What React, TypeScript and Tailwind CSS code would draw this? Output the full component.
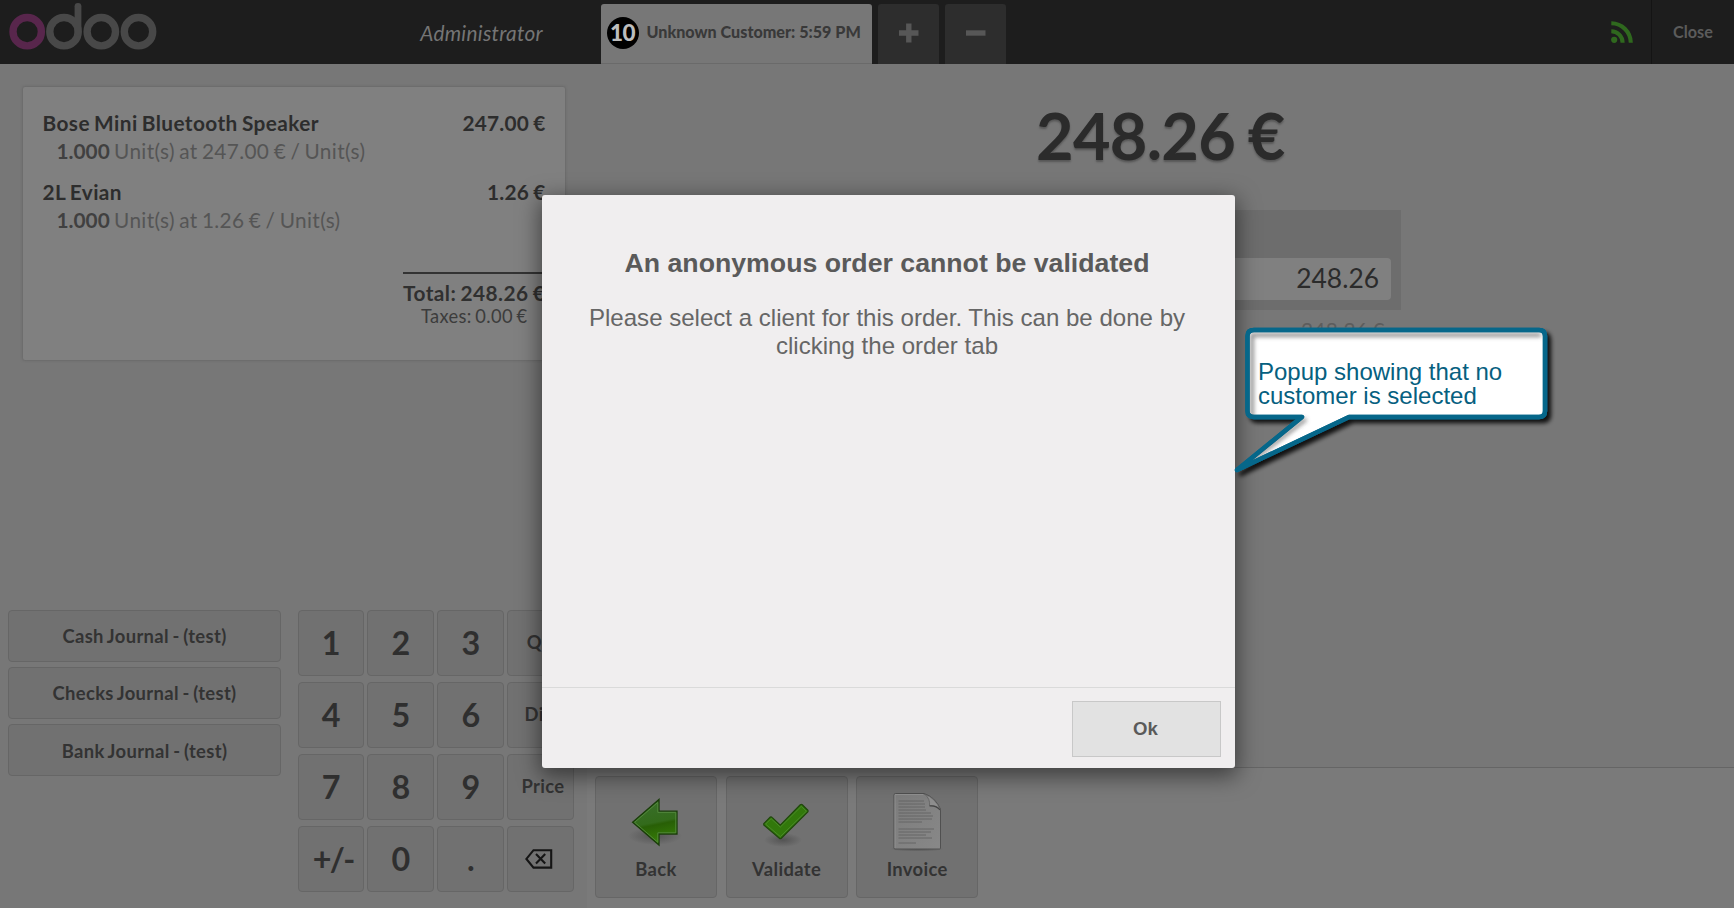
import React from "react";

const JOURNALS = ["Cash Journal - (test)", "Checks Journal - (test)", "Bank Journal - (test)"];

const KEYS = ["1", "2", "3", "Qty", "4", "5", "6", "Disc", "7", "8", "9", "Price", "+/-", "0", ".", "back"];

const LINES = [
  { name: "Bose Mini Bluetooth Speaker", total: "247.00 €", detail: "Unit(s) at 247.00 € / Unit(s)" },
  { name: "2L Evian", total: "1.26 €", detail: "Unit(s) at 1.26 € / Unit(s)" },
];

function OdooLogo() {
  return (
    <svg className="block shrink-0" width="160" height="56" viewBox="0 0 160 56" fill="none" strokeWidth="7.4">
      <g stroke="#484848">
        <circle cx="64" cy="31.7" r="14.2" />
        <path d="M78 32V6.3" strokeLinecap="round" strokeWidth="6.8" />
        <circle cx="101.3" cy="31.7" r="14.2" />
        <circle cx="138.5" cy="31.7" r="14.2" />
      </g>
      <circle cx="27.2" cy="31.7" r="14.2" stroke="#58264c" />
    </svg>
  );
}

function BackIcon() {
  return (
    <svg className="block" width="60" height="60" viewBox="0 0 60 60">
      <defs>
        <linearGradient id="arrow" x1="0.4" y1="0" x2="0.6" y2="1">
          <stop offset="0" stopColor="#3a6e2c" />
          <stop offset="0.5" stopColor="#336b1b" />
          <stop offset="0.56" stopColor="#285f06" />
          <stop offset="1" stopColor="#398308" />
        </linearGradient>
        <radialGradient id="shade">
          <stop offset="0" stopColor="#404040" stopOpacity="0.6" />
          <stop offset="1" stopColor="#404040" stopOpacity="0" />
        </radialGradient>
      </defs>
      <ellipse cx="29" cy="45" rx="27" ry="9" fill="url(#shade)" />
      <path d="M6.6 31.3L33 8.5V20.2H51V43H33V54Z" fill="url(#arrow)" stroke="#1a3d0a" strokeWidth="1.3" />
      <path d="M8.6 31.3L31.8 11.4V21.4H49.8V41.8H31.8V51.3Z" fill="none" stroke="#558a3e" strokeWidth="0.9" />
    </svg>
  );
}

function CheckIcon() {
  return (
    <svg className="block" width="60" height="60" viewBox="0 0 60 60">
      <ellipse cx="26" cy="49" rx="19" ry="7" fill="url(#shade)" />
      <g transform="translate(-1.2 0.6)">
        <path
          d="M8 32L14.5 25.5Q15.5 25 16.5 26L24.5 33.5L44.5 13.2Q45.5 12.4 46.5 13.2L52 18.6Q52.6 19.5 52 20.3L25.5 46.6Q24.5 47.4 23.6 46.6L8 33.4Z"
          fill="#32780b"
          stroke="#20480c"
          strokeWidth="1.3"
        />
        <path d="M9.8 32.5L15.3 27L24.5 35.5L45.4 14.8L50.6 19.6L24.5 45Z" fill="none" stroke="#4c8c2a" strokeWidth="0.9" />
      </g>
    </svg>
  );
}

function InvoiceIcon() {
  const rows = [11, 14, 17, 20, 23, 26, 29, 32, 39, 42, 45, 48, 53];
  const ends = [37, 38, 38, 39, 44, 46, 45, 35, 47, 44, 39, 45, 29];
  return (
    <svg className="block" width="60" height="60" viewBox="0 0 60 60">
      <defs>
        <linearGradient id="paper" x1="0" y1="0" x2="1" y2="1">
          <stop offset="0" stopColor="#7c7c7c" />
          <stop offset="1" stopColor="#888" />
        </linearGradient>
      </defs>
      <ellipse cx="30" cy="58" rx="27" ry="2.8" fill="url(#shade)" />
      <path d="M7 4Q7 2.5 8.5 2.5H37Q48 6 53.5 18V57Q53.5 58 52.5 58H8Q7 58 7 57Z" fill="url(#paper)" stroke="#505050" strokeWidth="1" />
      <path d="M8 57V3.5H36" fill="none" stroke="#929292" strokeWidth="0.9" />
      {rows.map((y, i) => (
        <path key={y} d={`M11.5 ${y - 1}H${ends[i]}`} stroke="#636363" strokeWidth="0.9" />
      ))}
      <path d="M37.5 3Q43.5 8 42.5 14.5Q49.5 14 53.5 19Q48.5 7 37.5 3Z" fill="#8e8e8e" stroke="#5c5c5c" strokeWidth="0.7" />
      <path d="M42.5 15Q49.5 14.5 53 19" stroke="#454545" strokeWidth="1.2" fill="none" />
    </svg>
  );
}

function BackspaceIcon() {
  return (
    <svg className="mr-[8px] block shrink-0" width="28" height="20" viewBox="0 0 28 20" fill="none" stroke="#151515" strokeWidth="2.1">
      <path d="M8.5 1.2H26.2V18.6H8.5L1.4 9.9Z" />
      <path d="M11 5.1L20.2 14.4M20.2 5.1L11 14.4" />
    </svg>
  );
}

function Header() {
  return (
    <header className="flex h-[63.6px] shrink-0 bg-[#1d1d1d]">
      <OdooLogo />
      <div className="w-[441px] pt-[16.5px] pr-[58px] text-right text-[20.8px] leading-[32px] tracking-[0.015em] text-[#757575] italic">
        Administrator
      </div>
      <div className="flex flex-1 gap-[6.4px] pt-1">
        <div className="flex w-[271px] rounded-t-[3px] border-b border-[#6a6a6a] bg-[#777] pl-[5.5px]">
          <div className="mt-[13px] flex size-8 items-center justify-center rounded-full bg-black text-[22.5px] font-black tracking-[-0.5px] text-[#bdbdbd]">
            10
          </div>
          <div className="mt-[15px] ml-[8px] text-[16.15px] leading-[26px] font-black tracking-normal [word-spacing:0px] whitespace-nowrap text-[#393939]">
            Unknown Customer: 5:59 PM
          </div>
        </div>
        <div className="flex w-[60.5px] justify-center rounded-t-[3px] bg-[#2d2d2d] pt-[18px]">
          <svg width="22" height="22" viewBox="0 0 22 22" fill="none" stroke="#575757" strokeWidth="5.4">
            <path d="M1 11H20.5M10.8 1.5V20.5" />
          </svg>
        </div>
        <div className="flex w-[60.5px] justify-center rounded-t-[3px] bg-[#2d2d2d] pt-[18px]">
          <svg width="22" height="22" viewBox="0 0 22 22" fill="none" stroke="#575757" strokeWidth="5.4">
            <path d="M1 11H20.5" />
          </svg>
        </div>
      </div>
      <div className="w-[51px] pt-[21px] pl-[10px]">
        <svg className="block" width="24" height="24" viewBox="0 0 24 24" fill="none" stroke="#2f681e" strokeWidth="4.1">
          <circle cx="4.2" cy="18.8" r="3.1" fill="#2f681e" stroke="none" />
          <path d="M1.3 10.2A11.5 11.5 0 0 1 12.6 21.7M1.3 2.2A19.7 19.7 0 0 1 20.8 21.7" />
        </svg>
      </div>
      <div className="w-[83px] border-l border-[#141414] pt-[18.5px] text-center text-[16.2px] leading-[26px] font-bold tracking-normal text-[#5b5b5b]">
        Close
      </div>
    </header>
  );
}

function Receipt() {
  return (
    <section className="mt-[23.4px] ml-[23px] h-[273px] w-[542px] rounded-[2px] bg-[#808080] pt-[22px] pr-[19.5px] pl-[19.5px] shadow-[0_0_2px_1px_#6b6b6b]">
      {LINES.map((line) => (
        <div key={line.name} className="h-[69.4px] text-[20.8px] leading-[28px] text-[#555]">
          <div className="flex justify-between font-bold text-[#2d2d2d]">
            <span className="tracking-[0.42px]">{line.name}</span>
            <span className="tracking-[0.25px]">{line.total}</span>
          </div>
          <div className="pl-[14px]">
            <b className="font-bold tracking-normal text-[#404040]">1.000</b> {line.detail}
          </div>
        </div>
      ))}
      <div className="mt-[24px] ml-auto w-[142.5px] border-t-2 border-[#333] pt-[4px] whitespace-nowrap text-[#303030]">
        <div className="text-[20.8px] leading-[30px] font-bold tracking-[0.022em]">Total: 248.26 €</div>
        <div className="text-center text-[18.3px] leading-[16px] text-[#3c3c3c]">Taxes: 0.00 €</div>
      </div>
    </section>
  );
}

function keyStyle(label: string) {
  if (label === "+/-") return "pl-[5px] text-[32.3px] tracking-[-0.05em] text-[#2f2f2f]";
  return label.length > 3 || label === "Qty" ? "pl-[5px] text-[18.4px] text-[#333]" : "pl-[1px] text-[32.3px] text-[#2f2f2f]";
}

function Controls() {
  return (
    <div className="mt-auto mb-[15.6px] flex items-start pl-2">
      <div className="flex w-[273px] flex-col gap-[5.4px]">
        {JOURNALS.map((name) => (
          <button
            key={name}
            className="h-[52px] rounded-[4px] border border-[#666] bg-[#717171] pt-[2px] text-[18.4px] font-bold text-[#333] [word-spacing:-1.3px]"
          >
            {name}
          </button>
        ))}
      </div>
      <div className="ml-[16.6px] grid grid-cols-[repeat(4,66.3px)] grid-rows-[repeat(4,66.6px)] gap-x-[3.6px] gap-y-[5.5px]">
        {KEYS.map((key) => (
          <button key={key} className={`flex items-center justify-center rounded-[4px] border border-[#666] bg-[#717171] font-bold ${keyStyle(key)}`}>
            {key === "back" ? <BackspaceIcon /> : key}
          </button>
        ))}
      </div>
    </div>
  );
}

function ActionButton({ label, children }: { label: string; children: React.ReactNode }) {
  return (
    <button className="flex h-[122px] w-[122px] flex-col items-center rounded-[4px] border border-[#666] bg-[#717171] pt-[14px] text-[18.4px] leading-[26px] font-bold text-[#333]">
      {children}
      <span className="mt-[5px]">{label}</span>
    </button>
  );
}

function PaymentScreen() {
  return (
    <main className="flex flex-1 flex-col">
      <div className="flex-1 pl-[449px]">
        <div className="mt-[27px] text-[64.8px] leading-[88px] font-bold tracking-[-0.7px] text-[#2b2b2b] [text-shadow:0_2px_2px_#575757] [word-spacing:-2.4px]">
          248.26 €
        </div>
        <div className="mt-[31.4px] flex h-[100px] w-[365px] items-end justify-end bg-[#6d6d6d] p-[10px]">
          <div className="h-[42px] w-[160px] rounded-[4px] bg-[#808080] pr-[12px] text-right text-[26.4px] leading-[41px] tracking-normal text-[#2b2b2b]">
            248.26
          </div>
        </div>
        <div className="mt-[6px] w-[349px] text-right text-[20.8px] leading-[28px] text-[#5d5d5d]">248.26 €</div>
      </div>
      <div className="flex h-[141px] gap-[8.6px] border-t border-[#656565] bg-[#7a7a7a] pt-[8px] pl-[8px]">
        <ActionButton label="Back">
          <BackIcon />
        </ActionButton>
        <ActionButton label="Validate">
          <CheckIcon />
        </ActionButton>
        <ActionButton label="Invoice">
          <InvoiceIcon />
        </ActionButton>
      </div>
    </main>
  );
}

function Popup() {
  return (
    <div className="absolute top-[195px] left-[541.5px] flex h-[573px] w-[693px] flex-col rounded-[3px] bg-[#f0eeef] text-center font-['Liberation_Sans',sans-serif] tracking-normal text-[#5a5a5a] shadow-[0_6px_22px_2px_rgba(0,0,0,0.5)] [word-spacing:0px]">
      <h1 className="mt-[49.5px] pr-[2px] text-[26.7px] leading-[36px] font-bold">An anonymous order cannot be validated</h1>
      <p className="mt-[23px] pr-[2px] text-[24.07px] leading-[28.4px] text-[#666]">
        Please select a client for this order. This can be done by
        <br />
        clicking the order tab
      </p>
      <footer className="mt-auto flex h-[81px] justify-end border-t border-[#dadada] pt-[12.5px] pr-[13.5px]">
        <button className="h-[56.5px] w-[149px] border border-[#c8c8c8] bg-[#e2e2e2] pr-[2px] text-[18.6px] font-bold text-[#5a5a5a]">Ok</button>
      </footer>
    </div>
  );
}

const BUBBLE = "M24 10H309Q315 10 315 16V91Q315 97 309 97H119L7 150L72 97H24Q17.5 97 17.5 91V16Q17.5 10 24 10Z";

function Callout() {
  return (
    <div className="absolute top-[320px] left-[1230px] h-[165px] w-[330px] tracking-normal [word-spacing:0px]">
      <svg className="absolute inset-0" width="330" height="165" viewBox="0 0 330 165">
        <defs>
          <filter id="drop" x="-10%" y="-10%" width="120%" height="130%">
            <feDropShadow dx="4" dy="4" stdDeviation="2.2" floodColor="#000" floodOpacity="0.85" />
          </filter>
          <filter id="soft">
            <feGaussianBlur stdDeviation="2" />
          </filter>
          <clipPath id="bubble">
            <path d={BUBBLE} />
          </clipPath>
        </defs>
        <path d={BUBBLE} fill="#fff" stroke="#06678a" strokeWidth="4.4" strokeLinejoin="round" filter="url(#drop)" />
        <g clipPath="url(#bubble)">
          <path d="M22 97V15H311M76 99L11 149" fill="none" stroke="#555" strokeOpacity="0.65" strokeWidth="4" filter="url(#soft)" />
        </g>
        <path d={BUBBLE} fill="none" stroke="#06678a" strokeWidth="4.4" strokeLinejoin="round" />
      </svg>
      <div className="relative pt-[40px] pl-[28px] font-['Liberation_Sans',sans-serif] text-[24px] leading-[24px] whitespace-nowrap text-[#06607f]">
        Popup showing that no
        <br />
        customer is selected
      </div>
    </div>
  );
}

export default function App() {
  return (
    <div className="relative flex h-[908px] w-[1734px] flex-col overflow-hidden bg-[#777] font-['Lato',sans-serif] tracking-[0.35px] [word-spacing:-1.3px]">
      <Header />
      <div className="flex min-h-0 flex-1">
        <aside className="flex w-[587px] shrink-0 flex-col">
          <Receipt />
          <Controls />
        </aside>
        <PaymentScreen />
      </div>
      <Popup />
      <Callout />
    </div>
  );
}
